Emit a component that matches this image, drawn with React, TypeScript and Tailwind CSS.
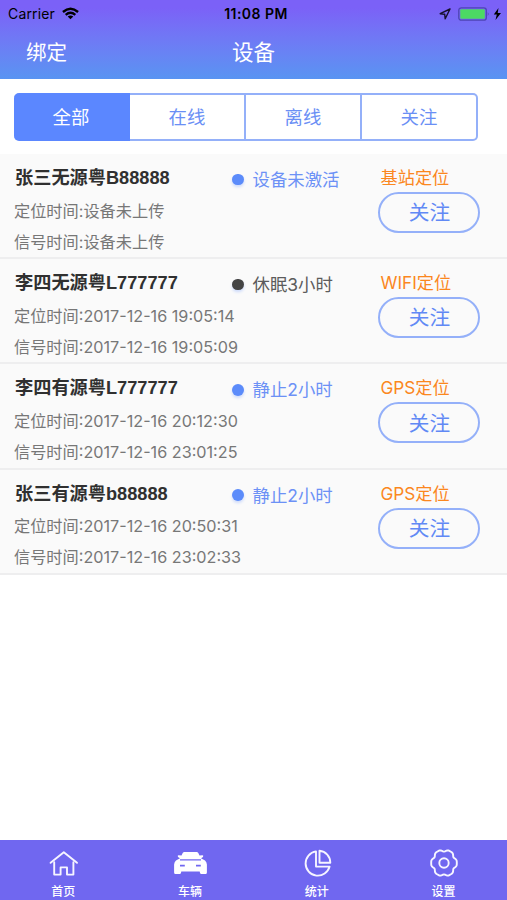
import { ReactNode } from 'react';

const tabs = ['全部', '在线', '离线', '关注'];

const devices = [
    { name: '张三无源粤', plate: 'B88888', located: '设备未上传', signal: '设备未上传', status: '设备未激活', active: true, mode: '基站定位' },
    { name: '李四无源粤', plate: 'L777777', located: '2017-12-16 19:05:14', signal: '2017-12-16 19:05:09', status: '休眠3小时', active: false, mode: 'WIFI定位' },
    { name: '李四有源粤', plate: 'L777777', located: '2017-12-16 20:12:30', signal: '2017-12-16 23:01:25', status: '静止2小时', active: true, mode: 'GPS定位' },
    { name: '张三有源粤', plate: 'b88888', located: '2017-12-16 20:50:31', signal: '2017-12-16 23:02:33', status: '静止2小时', active: true, mode: 'GPS定位' },
];

// Six soft lobes around the centre of a 30x30 box
const gearPath =
    'M' +
    Array.from({ length: 72 }, (_, i) => {
        const a = (i * 5 * Math.PI) / 180;
        const r = 12.2 + 0.95 * Math.cos(6 * a) - 0.35 * Math.cos(12 * a);
        return `${(15 + r * Math.cos(a)).toFixed(2)} ${(15 + 1.04 * r * Math.sin(a)).toFixed(2)}`;
    }).join('L') +
    'Z';

function NavIcon({ children }: { children: ReactNode }) {
    return (
        <svg width="34" height="30" viewBox="-2 0 34 30" fill="none" stroke="#f6f5ff" strokeWidth="1.9" strokeLinecap="round" strokeLinejoin="round">
            {children}
        </svg>
    );
}

const navItems = [
    {
        label: '首页',
        icon: (
            <NavIcon>
                <path d="M2.6 14.8 15.800 4.200 29 14.800" />
                <path d="M6.200 14.200V26.600H12.600V19.400H19V26.600H25.400V14.200" />
            </NavIcon>
        ),
    },
    {
        label: '车辆',
        icon: (
            <NavIcon>
                <path
                    fill="#fff"
                    stroke="none"
                    fillRule="evenodd"
                    d="M9.5 4H21.500Q22.800 4 23.300 5L24.500 7.500 27.500 7.200Q28.800 7.600 28 8.900L26 10.200 30 12.500Q31.700 13.800 31.900 16.500V24.500Q31.900 26 30.500 26H26.500Q25.100 26 25 24.800L24.700 23.600H6.300L6 24.800Q5.900 26 4.500 26H.5Q-.9 26-.9 24.500V16.500Q-.7 13.800 1 12.500L5 10.200 3 8.900Q2.200 7.600 3.500 7.200L6.500 7.500 7.700 5Q8.200 4 9.500 4ZM5 11.300V12.500H26V11.300ZM5 16.700V18.500H9.800V16.700ZM21 16.700V18.500H25.800V16.700Z"
                />
            </NavIcon>
        ),
    },
    {
        label: '统计',
        icon: (
            <NavIcon>
                <path d="M14 3.400A12.200 12.200 0 1 0 27.600 18.600H14Z" />
                <path d="M17.500 2.800A11.800 11.800 0 0 1 28.300 14.800H17.500Z" />
            </NavIcon>
        ),
    },
    {
        label: '设置',
        icon: (
            <NavIcon>
                <path d={gearPath} />
                <circle cx="15" cy="15" r="4.700" />
            </NavIcon>
        ),
    },
];

function StatusBar() {
    return (
        <div className="flex h-[27px] items-center text-black">
            <div className="flex flex-1 items-center pl-[8px]">
                <span className="text-[14px] tracking-[0.15px]">Carrier</span>
                <svg className="ml-[7px]" width="17" height="13" viewBox="0 0 18 13" fill="none" stroke="#000" strokeWidth="2.500">
                    <path d="M1 4.900Q9-2 17 4.900" />
                    <path d="M3.900 7.900Q9 3.700 14.100 7.900" />
                    <path d="M9 12.600 6 9.700Q9 7.400 12 9.700Z" fill="#000" stroke="none" />
                </svg>
            </div>
            <span className="mr-[-2px] text-[14px] font-semibold tracking-[0.450px]">11:08 PM</span>
            <div className="flex flex-1 items-center justify-end pr-[5px]">
                <svg width="12" height="12" viewBox="0 0 12 12" fill="none" stroke="#15102c" strokeWidth="1.400" strokeLinejoin="round">
                    <path d="M11 1 1.200 5.700 5.700 6.300 6.200 10.800Z" />
                </svg>
                <svg className="ml-[7px]" width="44" height="14" viewBox="0 0 44 14">
                    <rect x=".8" y=".8" width="27.500" height="12.400" rx="2.500" fill="none" stroke="#4d45b4" strokeWidth="1.300" />
                    <rect x="2.300" y="2.300" width="24.500" height="9.400" rx="1" fill="#4cd964" />
                    <path d="M29.800 5q1.500 2 0 4Z" fill="#4339a0" />
                    <path d="M40.500 1 35.800 7.500H38.800L37.500 13 43 6H39.700Z" fill="#000" />
                </svg>
            </div>
        </div>
    );
}

export default function App() {
    return (
        <div className="flex h-[900px] w-[507px] flex-col overflow-hidden bg-white font-[Inter,'Noto_Sans_CJK_SC',sans-serif]">
            <header className="h-[79px] shrink-0 bg-linear-to-b from-[#7b61f7] from-10% to-[#5894f2]">
                <StatusBar />
                <div className="flex h-[52px] items-center text-[20.500px] leading-none text-white">
                    <span className="w-[232px] pl-[26px]">绑定</span>
                    <h1 className="text-[21.500px]">设备</h1>
                </div>
            </header>

            {/* Filter */}
            <div className="flex h-[75px] shrink-0 px-[14px] pt-[14px]">
                {tabs.map((tab, idx) => (
                    <button
                        key={tab}
                        className={`flex h-[48px] w-[116px] items-center justify-center border-y-2 border-r-2 text-[18.400px] leading-none first:rounded-l-[5px] last:rounded-r-[5px] ${
                            idx === 0 ? 'border-[#5b87ff] bg-[#5b87ff] text-white' : 'border-[#94b0f9] text-[#6a8ff5]'
                        }`}
                    >
                        {tab}
                    </button>
                ))}
            </div>

            {/* Device list */}
            <ul className="flex-1">
                {devices.map((device, idx) => (
                    <li key={idx} className="flex h-[105.200px] border-b-2 border-[#eeeeef] bg-[#fafafa] pl-[14px]">
                        <div className="w-[217px] whitespace-nowrap pt-[10px]">
                            <h2 className="pl-px text-[18.200px] font-bold leading-[26px] text-[#303030]">
                                {device.name}
                                <span className="font-['Liberation_Sans']">{device.plate}</span>
                            </h2>
                            <p className="mt-[4.500px] text-[16.200px] leading-[31px] text-[#777]">定位时间:{device.located}</p>
                            <p className="text-[16.200px] leading-[31px] text-[#777]">信号时间:{device.signal}</p>
                        </div>
                        <div className={`flex w-[147px] items-center self-start whitespace-nowrap pt-[13px] text-[17.400px] leading-[26px] ${device.active ? 'text-[#6c91f6]' : 'text-[#5c5c5c]'}`}>
                            <span className={`-mt-px ml-px mr-[9px] size-[11.500px] rounded-full shadow-[0_2px_3px_#cddafa] ${device.active ? 'bg-[#5b8bfa]' : 'bg-[#444]'}`} />
                            {device.status}
                        </div>
                        <div className="pt-[11px]">
                            <p className="pl-[2.500px] text-[17.200px] leading-[26px] text-[#fb871e]">{device.mode}</p>
                            <button className="mt-px flex h-[41px] w-[102px] items-center justify-center rounded-full border-2 border-[#94b0f9] pl-px pt-[2px] text-[20.700px] leading-none text-[#6189f5]">
                                关注
                            </button>
                        </div>
                    </li>
                ))}
            </ul>

            <nav className="flex h-[60px] shrink-0 bg-[#7067f0]">
                {navItems.map((item) => (
                    <a key={item.label} className="flex flex-1 flex-col items-center pt-[8px] text-white">
                        {item.icon}
                        <span className="mt-[6px] text-[12px] font-medium leading-[15px]">{item.label}</span>
                    </a>
                ))}
            </nav>
        </div>
    );
}
